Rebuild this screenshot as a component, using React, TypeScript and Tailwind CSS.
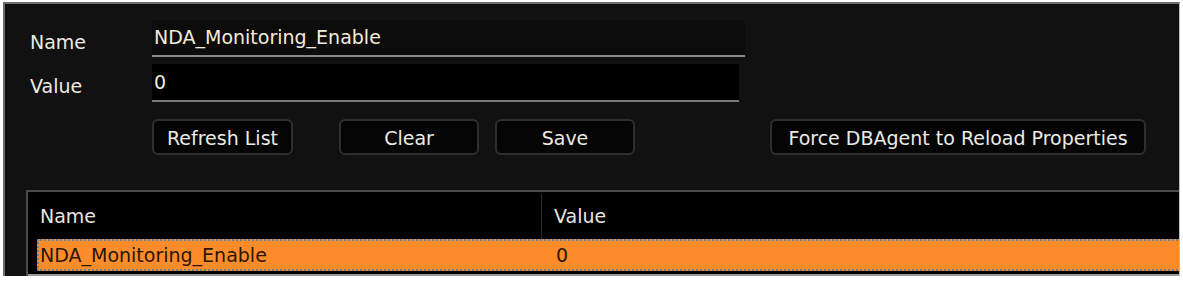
const font = { fontFamily: '"DejaVu Sans", Verdana, sans-serif' }

function Btn(props: { label: string; w: string }) {
  return (
    <button
      className={`${props.w} h-[36px] flex items-center justify-center pt-[2px] rounded-[6px] border-2 border-[#2e2e2e] bg-[#050505] text-[19px] text-[#ebebe6]`}
    >
      {props.label}
    </button>
  )
}

export default function App() {
  return (
    <div className="w-[1183px] h-[281px] bg-white pt-[2px] pl-[3px] pr-[3px] overflow-hidden" style={font}>
      <div className="relative h-[274px] bg-[#111111] border-t-2 border-l-2 border-r border-[#6e6e6e] border-r-[#bdbdbd] overflow-hidden">
        {/* form */}
        <div className="flex flex-col pl-[25px] pt-[16px]">
          <div className="flex items-center h-[37px]">
            <span className="w-[122px] pt-[7px] text-[19px] text-[#ebebe4]">Name</span>
            <div className="w-[593px] h-[37px] flex items-center pl-[2px] bg-[#0c0c0c] border-b-2 border-[#8a8a8a] text-[19px] text-[#f2ecd8]">
              NDA_Monitoring_Enable
            </div>
          </div>
          <div className="flex items-center h-[38px] mt-[7px]">
            <span className="w-[122px] pt-[6px] text-[19px] text-[#ebebe4]">Value</span>
            <div className="w-[587px] h-[38px] flex items-center pl-[2px] bg-black border-b-2 border-[#7a7a7a] text-[19px] text-[#f2ecd8]">
              0
            </div>
          </div>
          <div className="flex items-center mt-[17px] pl-[122px]">
            <Btn label="Refresh List" w="w-[141px]" />
            <div className="w-[46px]" />
            <Btn label="Clear" w="w-[140px]" />
            <div className="w-[16px]" />
            <Btn label="Save" w="w-[140px]" />
            <div className="w-[135px]" />
            <Btn label="Force DBAgent to Reload Properties" w="w-[376px]" />
          </div>
        </div>

        {/* list */}
        <div className="absolute left-[21px] top-[186px] w-[1200px] h-[100px] bg-black border-t-2 border-l-2 border-[#4a4a4a]">
          <div className="flex h-[47px] items-center pt-[2px] text-[19px] text-[#e6e6e2]">
            <div className="w-[514px] h-full flex items-center pl-[12px] border-r border-[#2c2c2c]">Name</div>
            <div className="pl-[12px]">Value</div>
          </div>
          <div className="flex h-[32px] items-center ml-[9px] bg-[#fe8c2a] border-2 border-dotted border-[#6a7f90] text-[19px] text-[#2a1600]">
            <div className="w-[504px] pl-[1px]">NDA_Monitoring_Enable</div>
            <div className="pl-[13px]">0</div>
          </div>
          <div className="h-[3px] bg-black" />
          <div className="h-[2px] bg-[#9a9a9a]" />
        </div>
      </div>
    </div>
  )
}
